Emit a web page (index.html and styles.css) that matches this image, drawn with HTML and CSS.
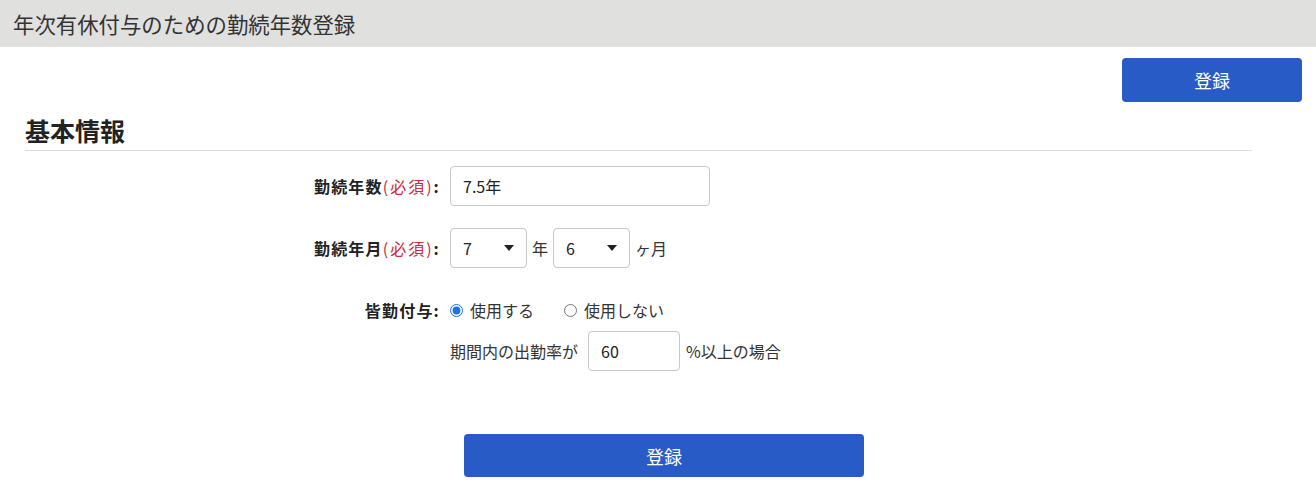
FILE: index.html
```html
<!DOCTYPE html>
<html lang="ja">
<head>
<meta charset="utf-8">
<title>年次有休付与のための勤続年数登録</title>
<link rel="stylesheet" href="styles.css">
</head>
<body>
<header class="page-header">年次有休付与のための勤続年数登録</header>
<div class="top-actions">
  <button class="btn btn-top" type="button">登録</button>
</div>
<section class="section">
  <h2 class="section-title">基本情報</h2>
  <div class="form">
    <div class="form-row">
      <label class="label">勤続年数<span class="req">(必須)</span>:</label>
      <div class="control">
        <input class="text-input years-input" type="text" value="7.5年">
      </div>
    </div>
    <div class="form-row">
      <label class="label">勤続年月<span class="req">(必須)</span>:</label>
      <div class="control">
        <div class="select"><span>7</span><span class="caret"></span></div>
        <span class="unit">年</span>
        <div class="select"><span>6</span><span class="caret"></span></div>
        <span class="unit">ヶ月</span>
      </div>
    </div>
    <div class="form-row row-radio">
      <label class="label">皆勤付与:</label>
      <div class="control-col">
        <div class="radios">
          <label class="radio-item"><input type="radio" name="kaikin" checked><span>使用する</span></label>
          <label class="radio-item"><input type="radio" name="kaikin"><span>使用しない</span></label>
        </div>
        <div class="rate">
          <span>期間内の出勤率が</span>
          <input class="text-input rate-input" type="text" value="60">
          <span>%以上の場合</span>
        </div>
      </div>
    </div>
  </div>
  <div class="bottom-actions">
    <button class="btn btn-bottom" type="button">登録</button>
  </div>
</section>
</body>
</html>
```

FILE: styles.css
```css
* { box-sizing: border-box; }
body {
  margin: 0;
  font-family: "Noto Sans CJK JP", "Noto Sans", sans-serif;
  color: #333;
  background: #fff;
  font-size: 16px;
}
.page-header {
  height: 47px;
  line-height: 47px;
  background: #e0e0df;
  padding-left: 13px;
  font-size: 21.4px;
  color: #333;
}
.top-actions {
  display: flex;
  justify-content: flex-end;
  padding: 11px 14px 0 0;
}
.btn {
  background: #285bc6;
  color: #fff;
  border: none;
  border-radius: 4px;
  font-family: inherit;
  font-size: 18px;
  cursor: pointer;
}
.btn-top { width: 180px; height: 44px; }
.section { margin: 0 64px 0 25px; }
.section-title {
  margin: 10px 0 0;
  font-size: 25px;
  font-weight: bold;
  color: #222;
  line-height: 37px;
  padding-bottom: 1px;
  border-bottom: 1px solid #dcdcdc;
}
.form { margin-top: 15px; }
.form-row {
  display: grid;
  grid-template-columns: 415px 1fr;
  column-gap: 10px;
  align-items: center;
  margin-bottom: 22px;
}
.row-radio { align-items: start; margin-top: 30px; }
.label {
  text-align: right;
  font-weight: bold;
  color: #222;
  white-space: nowrap;
  letter-spacing: 1.2px;
}
.row-radio .label { line-height: 24px; }
.req { color: #cc2a3a; font-weight: normal; letter-spacing: 2px; }
.control { display: flex; align-items: center; }
.text-input {
  height: 40px;
  border: 1px solid #c8c8c8;
  border-radius: 4px;
  padding: 0 12px;
  font-family: inherit;
  font-size: 16px;
  color: #222;
}
.years-input { width: 260px; }
.select {
  width: 77px;
  height: 40px;
  border: 1px solid #c8c8c8;
  border-radius: 4px;
  display: flex;
  align-items: center;
  justify-content: space-between;
  padding: 0 12px;
  color: #222;
}
.caret {
  width: 0;
  height: 0;
  border-left: 5px solid transparent;
  border-right: 5px solid transparent;
  border-top: 6px solid #222;
}
.unit { margin: 0 5px; }
.control-col { display: flex; flex-direction: column; }
.radios { display: flex; align-items: center; height: 24px; }
.radio-item { display: flex; align-items: center; margin-right: 30px; }
.radio-item input {
  margin: 0 7px 0 0;
  width: 13px;
  height: 13px;
  accent-color: #1a73e8;
}
.rate { display: flex; align-items: center; margin-top: 9px; }
.rate-input { width: 92px; margin: 0 6px 0 10px; }
.bottom-actions { margin-top: 63px; padding-left: 439px; }
.btn-bottom { width: 400px; height: 43px; }
```
